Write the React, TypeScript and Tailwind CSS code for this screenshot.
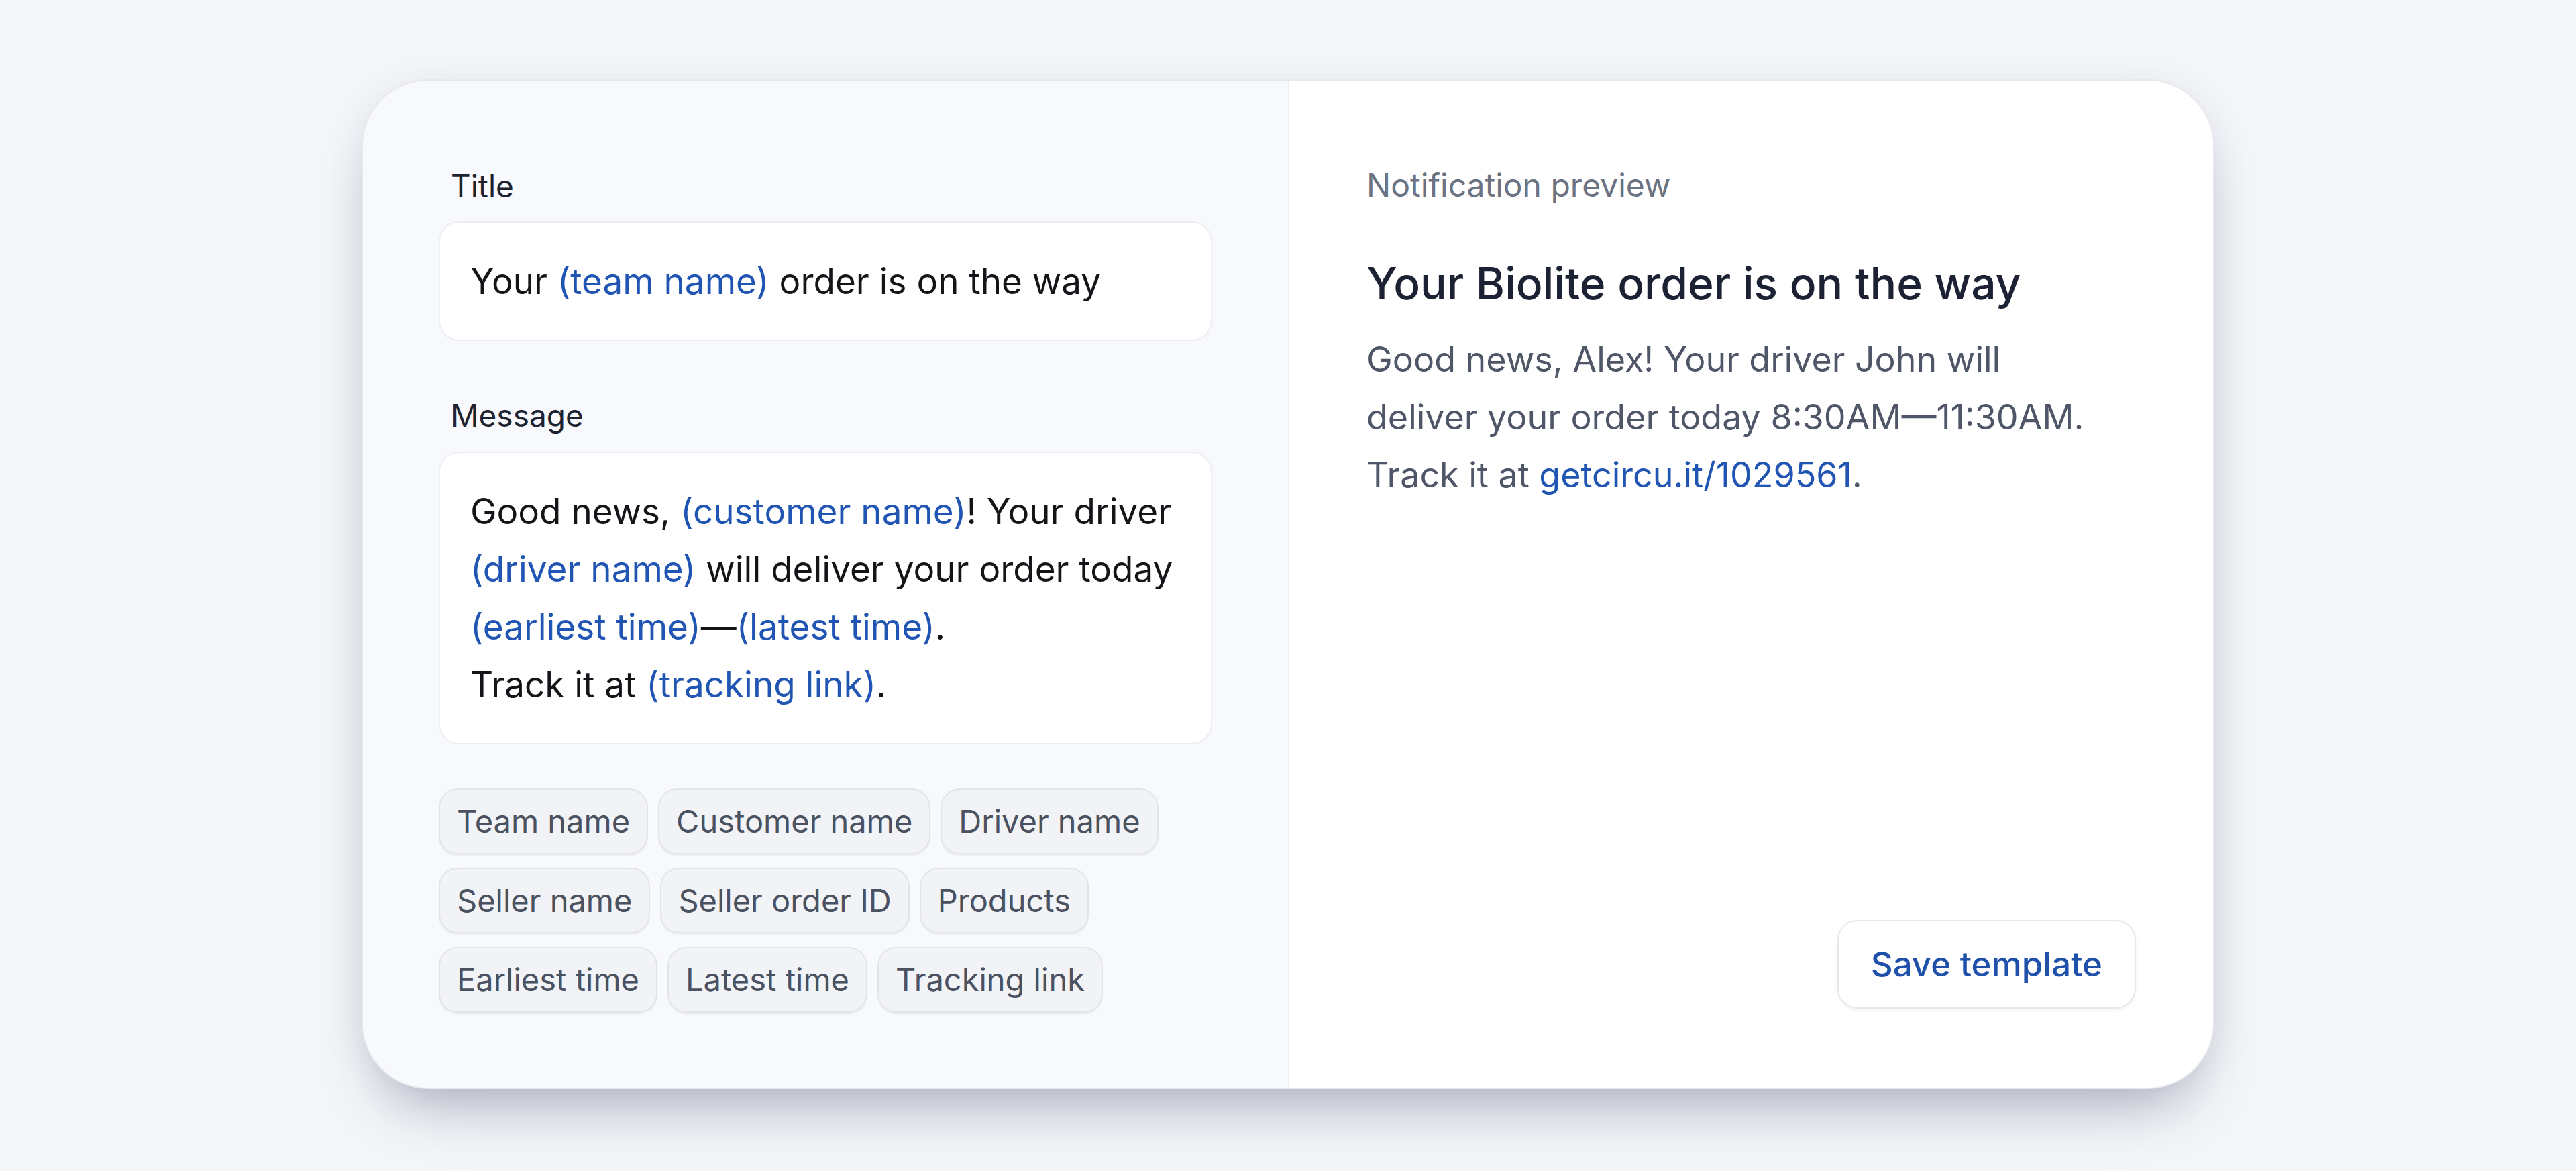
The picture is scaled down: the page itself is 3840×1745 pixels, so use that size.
import React from 'react'

const blue = 'text-[#2155b3]'

const chips = [
  ['Team name', 'Customer name', 'Driver name'],
  ['Seller name', 'Seller order ID', 'Products'],
  ['Earliest time', 'Latest time', 'Tracking link'],
]

function Token({ children }: { children: React.ReactNode }) {
  return <span className={blue}>{children}</span>
}

export default function App() {
  return (
    <div
      className="min-h-screen w-full bg-[#f5f6f9] pt-[118px]"
      style={{ fontFamily: 'Inter, "Noto Sans", sans-serif' }}
    >
      <div className="mx-auto flex w-[2762px] overflow-hidden rounded-[100px] border-2 border-[#e7e9ee] bg-white shadow-[0_50px_90px_-30px_rgba(30,40,80,0.35),0_0_60px_rgba(30,40,80,0.05)]">
        {/* Editor */}
        <div className="flex w-1/2 flex-col bg-[#f8f9fc] px-[113px] pt-[127px] pb-[112px]">
          <label className="pl-[18px] text-[46px] leading-[60px] text-[#1d2230]">Title</label>
          <div className="mt-[23px] rounded-[30px] border-2 border-[#eceef2] bg-white px-[45px] py-[44px] text-[53px] leading-[86px] text-[#131519]">
            Your <Token>(team name)</Token> order is on the way
          </div>

          <label className="mt-[81px] pl-[18px] text-[46px] leading-[60px] text-[#1d2230]">Message</label>
          <div className="mt-[24px] rounded-[30px] border-2 border-[#eceef2] bg-white px-[45px] py-[44px] text-[53px] leading-[86px] text-[#131519]">
            Good news, <Token>(customer name)</Token>! Your driver <Token>(driver name)</Token> will deliver your order
            today <Token>(earliest time)</Token>—<Token>(latest time)</Token>.
            <br />
            Track it at <Token>(tracking link)</Token>.
          </div>

          <div className="mt-[66px] flex flex-col gap-[20px]">
            {chips.map((row, i) => (
              <div key={i} className="flex gap-[15px]">
                {row.map(c => (
                  <span
                    key={c}
                    className="flex h-[98px] items-center rounded-[28px] border-2 border-[#e2e4ea] bg-[#f2f3f6] px-[25px] text-[47px] text-[#4a5160] shadow-[0_3px_0_rgba(20,30,60,0.04)]"
                  >
                    {c}
                  </span>
                ))}
              </div>
            ))}
          </div>
        </div>

        {/* Preview */}
        <div className="flex w-1/2 flex-col border-l-2 border-[#eceef2] bg-white px-[115px] pt-[126px] pb-[118px]">
          <span className="text-[48px] leading-[60px] text-[#6b7281]">Notification preview</span>
          <h2 className="mt-[76px] text-[66px] font-medium leading-[80px] text-[#1c2233]">
            Your Biolite order is on the way
          </h2>
          <p className="mt-[31px] max-w-[1100px] text-[52px] leading-[86px] text-[#4f5667]">
            Good news, Alex! Your driver John will deliver your order today 8:30AM—11:30AM. Track it at{' '}
            <span className={`${blue} whitespace-nowrap`}>getcircu.it/1029561</span>.
          </p>
          <button className="mt-auto h-[132px] self-end rounded-[30px] border-2 border-[#e6e8ed] bg-white px-[48px] text-[51px] font-medium text-[#1f50aa] shadow-[0_3px_6px_rgba(20,30,60,0.04)]">
            Save template
          </button>
        </div>
      </div>
    </div>
  )
}
